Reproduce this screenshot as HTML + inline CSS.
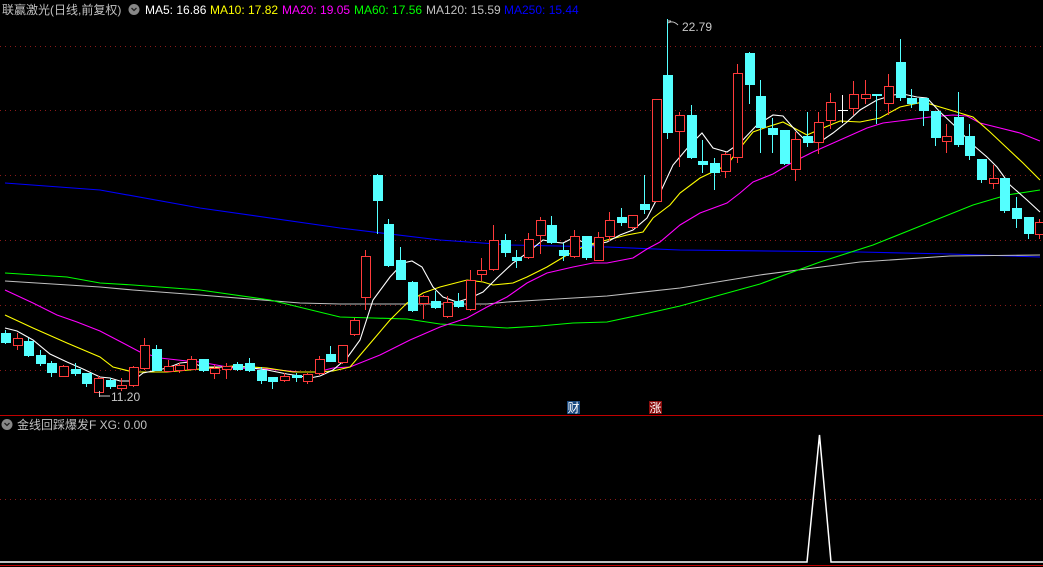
<!DOCTYPE html>
<html><head><meta charset="utf-8"><style>
html,body{margin:0;padding:0;background:#000;width:1043px;height:567px;overflow:hidden}
svg{display:block}
text{font-family:"Liberation Sans","Noto Sans CJK SC",sans-serif;font-size:12px}
</style></head><body>
<svg id="s" width="1043" height="567" xmlns="http://www.w3.org/2000/svg">
<g stroke="#8b1a1a" stroke-width="1" stroke-dasharray="1,4">
<line x1="0" y1="46.5" x2="1043" y2="46.5"/><line x1="0" y1="110.5" x2="1043" y2="110.5"/>
<line x1="0" y1="175.5" x2="1043" y2="175.5"/><line x1="0" y1="240.5" x2="1043" y2="240.5"/>
<line x1="0" y1="305.5" x2="1043" y2="305.5"/><line x1="0" y1="370.5" x2="1043" y2="370.5"/>
<line x1="0" y1="499.5" x2="1043" y2="499.5"/>
</g>
<line x1="0" y1="415.5" x2="1043" y2="415.5" stroke="#c00000"/>
<line x1="0" y1="565.5" x2="1043" y2="565.5" stroke="#c00000"/>
<g fill="none" stroke-width="1.1">
<polyline stroke="#0000ff" points="5,183 100,190 200,208 340,228 440,240 510,245 607,247 680,250 860,252 950,254 1040,257"/>
<polyline stroke="#c0c0c0" points="5,281 100,287 133,290 200,295 300,303 340,304 390,304 487,304 507,302 540,300 607,296 680,288 760,275 860,262 950,256 1040,255"/>
<polyline stroke="#00ff00" points="5,273 67,277 100,283 133,285 200,290 270,300 340,317 373,318 407,319 440,324 473,326 507,328 540,326 573,323 607,322 640,315 680,306 760,284 820,262 873,245 923,225 973,205 1007,195 1040,190"/>
<polyline stroke="#ff00ff" points="5,290 33,303 57,315 77,322 100,331 123,343 140,352 160,358 187,361 200,362 233,368 267,369 300,372 317,372 333,368 350,367 380,355 410,340 440,327 467,318 487,307 507,297 527,283 547,273 573,267 593,263 607,263 633,258 647,249 660,242 680,225 700,213 727,203 740,193 753,182 773,174 793,162 813,152 840,140 867,128 883,123 907,120 930,117 953,115 967,116 980,123 1000,128 1020,133 1040,141"/>
<polyline stroke="#ffff00" points="5,315 33,328 67,343 100,357 113,367 133,372 167,372 200,369 233,366 267,368 293,372 317,372 333,371 350,367 373,340 390,320 407,303 423,293 440,287 467,280 483,282 493,285 513,283 527,277 547,267 567,255 587,245 607,240 627,235 643,232 653,218 670,205 680,193 700,178 727,165 740,148 753,132 767,127 783,122 807,135 823,128 840,121 860,122 880,118 900,107 923,102 950,110 973,117 990,132 1007,148 1023,163 1040,180"/>
<polyline stroke="#ffffff" points="5,328 17,331 33,340 50,354 67,362 83,369 100,377 110,378 120,381 133,381 143,373 153,371 167,368 180,363 190,362 203,367 213,367 233,367 247,367 253,368 267,370 287,374 300,376 310,378 320,376 333,370 347,358 360,340 373,300 390,277 403,263 412,261 422,267 433,287 443,297 457,302 470,298 483,292 497,278 513,263 527,253 543,240 553,242 563,243 573,238 583,242 593,245 607,242 620,235 633,230 647,218 660,193 673,165 690,145 702,133 713,148 727,152 740,143 757,125 773,115 783,116 797,132 807,142 820,142 833,133 847,122 860,110 877,100 893,95 903,94 917,97 927,98 940,112 957,128 973,145 987,157 997,167 1010,185 1027,200 1040,212"/>
</g>
<g id="c" shape-rendering="crispEdges"></g>
<line x1="667.5" y1="19" x2="667.5" y2="75" stroke="#54ffff"/>
<path d="M667.5,21 L671,21 M668,23 Q673,20 678,25" stroke="#c8c8c8" fill="none"/>
<text x="682" y="31" fill="#c8c8c8">22.79</text>
<path d="M99.5,391 L99.5,397 M99.5,396 L110,396" stroke="#c8c8c8" fill="none"/>
<text x="111" y="401" fill="#c8c8c8">11.20</text>
<rect x="567" y="401" width="13" height="13" fill="#1a4a80"/>
<text x="567.5" y="412" fill="#fff" style="font-size:12px">财</text>
<rect x="649" y="401" width="13" height="13" fill="#8a0c0c"/>
<text x="649.5" y="412" fill="#fff" style="font-size:12px">涨</text>
<text x="2" y="14" fill="#c0c0c0">联赢激光(日线,前复权)</text>
<circle cx="134" cy="9.5" r="5.5" fill="#888"/>
<path d="M131.5,8 L134,10.5 L136.5,8" stroke="#222" fill="none" stroke-width="1.3"/>
<text x="145" y="14" fill="#ffffff">MA5: 16.86</text>
<text x="210" y="14" fill="#ffff00">MA10: 17.82</text>
<text x="282" y="14" fill="#ff00ff">MA20: 19.05</text>
<text x="354" y="14" fill="#00ff00">MA60: 17.56</text>
<text x="426" y="14" fill="#c0c0c0">MA120: 15.59</text>
<text x="504" y="14" fill="#0000ff">MA250: 15.44</text>
<circle cx="7" cy="424.5" r="5.5" fill="#888"/>
<path d="M4.5,423 L7,425.5 L9.5,423" stroke="#222" fill="none" stroke-width="1.3"/>
<text x="17" y="429" fill="#c0c0c0">金线回踩爆发F  XG: 0.00</text>
<polyline points="0,562 807,562 819.5,435 831,562 1043,562" fill="none" stroke="#fff" stroke-width="1.5"/>
</svg>
<script>
var D=[
['d',333,342,330,343],['u',338,345,333,349],['d',341,355,338,356],['d',355,363,350,365],['d',363,372,361,376],['u',366,376,365,376],['d',369,373,363,375],['d',373,383,373,386],['u',378,392,376,392],['d',380,386,378,388],
['u',385,388,378,390],['u',367,385,366,386],['u',345,368,338,369],['d',349,370,345,370],['u',366,371,360,371],['u',365,370,363,372],['u',359,369,356,369],['d',359,370,359,371],['u',368,373,365,378],['u',366,369,363,378],
['d',364,369,362,370],['d',363,370,358,371],['d',370,380,367,383],['d',377,381,377,388],['u',376,380,373,381],['d',375,377,373,381],['u',374,381,373,383],['u',359,373,356,374],['d',354,361,346,361],['u',345,362,345,363],
['u',320,334,318,335],['u',256,297,250,309],['d',175,200,174,233],['d',224,265,219,266],['d',260,279,247,279],['d',282,310,281,311],['u',296,303,295,318],['d',301,307,291,308],['u',302,316,296,317],['d',301,306,293,307],
['u',280,309,270,310],['u',270,274,258,280],['u',240,269,225,270],['d',240,252,234,256],['d',257,260,250,267],['u',239,257,233,258],['u',220,235,217,253],['d',225,242,216,243],['d',250,255,243,260],['u',236,256,230,257],
['d',236,257,236,259],['u',237,260,232,260],['u',220,236,212,240],['d',217,222,208,225],['u',215,227,215,228],['d',204,209,175,213],['u',99,201,99,201],['d',75,132,19,138],['u',115,131,112,166],['d',115,157,105,158],
['d',161,164,140,172],['d',163,172,158,189],['u',154,171,152,177],['u',73,157,64,162],['d',53,84,52,103],['d',96,127,80,152],['d',128,134,118,152],['d',130,163,130,164],['u',139,169,132,180],['d',136,142,112,146],
['u',122,142,112,153],['u',102,120,93,128],['w',110,110,95,122],['u',94,108,81,114],['u',94,98,80,103],['d',94,95,94,123],['u',86,103,74,114],['d',62,97,39,100],['d',98,103,89,107],['d',98,110,98,125],
['d',111,137,111,145],['u',136,141,124,152],['d',117,144,92,146],['d',136,155,124,159],['d',159,179,159,182],['u',178,183,165,188],['d',178,210,178,212],['d',208,218,197,227],['d',217,233,217,238],['u',222,234,219,238]];
var h='';
for(var i=0;i<D.length;i++){var d=D[i],x=Math.round(5+11.62*i),t=d[0];
var col=t=='u'?'#ff3b3b':t=='d'?'#54ffff':'#ffffff';
h+='<line x1="'+(x+.5)+'" y1="'+d[3]+'" x2="'+(x+.5)+'" y2="'+(d[4]+1)+'" stroke="'+col+'"/>';
if(t=='u'){h+='<rect x="'+(x-3.5)+'" y="'+(d[1]+.5)+'" width="9" height="'+Math.max(1,d[2]-d[1])+'" fill="#000" stroke="'+col+'"/>';}
else if(t=='d'){h+='<rect x="'+(x-4)+'" y="'+d[1]+'" width="10" height="'+Math.max(2,d[2]-d[1]+1)+'" fill="'+col+'"/>';}
else{h+='<line x1="'+(x-4)+'" y1="'+(d[1]+.5)+'" x2="'+(x+6)+'" y2="'+(d[1]+.5)+'" stroke="'+col+'"/>';}}
document.getElementById('c').innerHTML=h;
</script>
</body></html>
